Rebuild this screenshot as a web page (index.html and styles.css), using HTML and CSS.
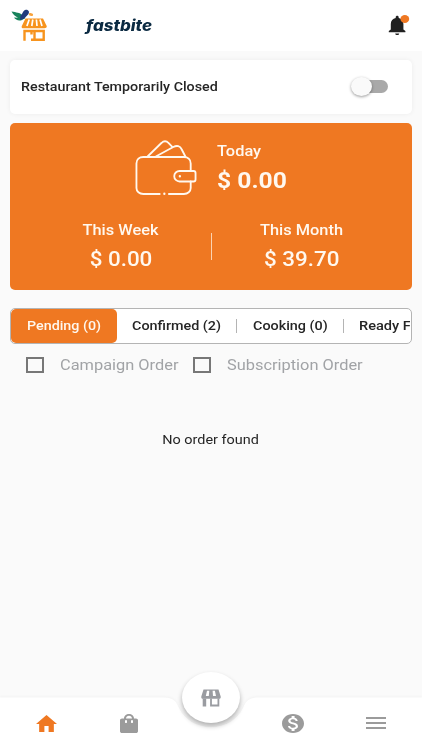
FILE: index.html
```html
<!DOCTYPE html>
<html lang="en">
<head>
<meta charset="utf-8">
<meta name="viewport" content="width=device-width, initial-scale=1">
<title>fastbite</title>
<link rel="stylesheet" href="styles.css">
</head>
<body>
<div class="app">
  <header class="topbar">
    <svg class="logo" viewBox="0 0 36 33" aria-hidden="true">
      <path fill="#f7941e" d="M14.500 9.500h17.500L35.700 17c.4 1.500-.8 2.200-2.200 2.200H12.300c-1.400 0-2-.8-1.500-2.200z"/>
      <path stroke="#fff" stroke-width="1.700" d="M18.200 10.500l-2.300 6.500M21.800 10.500l-1 6.500M25.400 10.500l.6 6.500M29 10.500l2 6.500"/>
      <path fill="none" stroke="#f7941e" stroke-width="2.400" d="M13.500 31.800V22h7v3.500M23.500 22h9.200v8.700h-9.200zM19 22h5M20 30.700h4"/>
      <path fill="#17835c" d="M.5 2.500c5 1 8 1 11 3.500l3 3-4 2.200c-3.500 1-6-.7-7.500-2.700l4 .2C4.200 7.300 2 5.500.5 2.500z"/>
      <path fill="#213a7c" d="M9.500 6.500c2-.5 2.200-5.500 5.500-5.700 3 0 3.700 2.500 2.300 4.400L13 9.800 9 11z"/>
      <path fill="#f8a33c" d="M18.300 4c3 0 4.800 1 3.200 3-1.200.3-2.500 0-3.700-1z"/>
    </svg>
    <h1 class="brand"><span>fastbite</span></h1>
    <svg class="bell" viewBox="0 0 22 22" aria-hidden="true">
      <path fill="#202020" d="M.8 17.300v-1.200l2-1.700V9c0-3.200 2-5.300 4.900-6V2.300c0-2 3-2 3 0V3c2.800.7 4.700 2.800 4.700 6v5.400l2 1.700v1.200zM7.200 18.400h4c0 2.200-4 2.200-4 0z"/>
      <ellipse cx="16.800" cy="4" rx="4.400" ry="4" fill="#ef7822"/>
    </svg>
  </header>

  <main class="content">
    <section class="status">
      <span class="t status-label">Restaurant Temporarily Closed</span>
      <span class="switch"><span class="knob"></span></span>
    </section>

    <section class="earnings">
      <div class="today">
        <svg class="wallet" viewBox="0 0 64 56" preserveAspectRatio="none" fill="none" stroke="#fff8ef" stroke-width="1.900" stroke-linecap="round" stroke-linejoin="round" aria-hidden="true">
          <path d="M25.500 54H8.500c-4 0-7-2.500-7-6V23.500c0-4 3-6.500 7-6.500h42c4 0 7 2.500 7 6.500V31M57.500 41.500V48c0 3.500-3 6-7 6H35"/>
          <path d="M13 16.500L27.500 2.800c2-2 5-2 7 0l4 4M21.500 16.500L39.500 7c4-2 7-1 8.500 2l4 7.500"/>
          <path d="M60.500 31H46c-3 0-5.500 2.300-5.500 5.200S43 41.500 46 41.500h14.500c1.200 0 2-.8 2-2V33c0-1.200-.8-2-2-2z"/>
          <path d="M46.300 36.200h.01M30.300 53.800h.01" stroke-width="2.400"/>
        </svg>
        <div class="figure-left">
          <span class="t caption cap-today">Today</span>
          <span class="t amount amt-today">$ 0.00</span>
        </div>
      </div>
      <div class="periods">
        <div class="figure week">
          <span class="t caption">This Week</span>
          <span class="t amount">$ 0.00</span>
        </div>
        <div class="rule"></div>
        <div class="figure month">
          <span class="t caption">This Month</span>
          <span class="t amount">$ 39.70</span>
        </div>
      </div>
    </section>

    <nav class="tabs">
      <div class="track">
        <div class="tab active"><span class="t">Pending (0)</span></div>
        <div class="tab confirmed"><span class="t">Confirmed (2)</span></div>
        <div class="tab cooking"><span class="t">Cooking (0)</span></div>
        <div class="tab ready"><span class="t">Ready F</span></div>
      </div>
    </nav>

    <div class="filters">
      <span class="box"></span><span class="filter campaign"><span class="t">Campaign Order</span></span>
      <span class="box"></span><span class="filter"><span class="t">Subscription Order</span></span>
    </div>

    <p class="empty"><span class="t">No order found</span></p>
  </main>

  <footer class="bottom">
    <svg class="shape" viewBox="0 0 422 54" preserveAspectRatio="none" aria-hidden="true">
      <path fill="#fff" d="M0 1.500H164C173 1.500 176 5 179 12C184 23 196 31 211 31S238 23 243 12C246 5 249 1.500 258 1.500H422V54H0z"/>
    </svg>
    <div class="item"><svg class="home" viewBox="2 3 20 17" preserveAspectRatio="none"><path fill="#ef7822" d="M10 20v-6h4v6h5v-8h3L12 3 2 12h3v8z"/></svg></div>
    <div class="item"><svg class="bag" viewBox="3 1 18 21" preserveAspectRatio="none"><path fill="#9b9b9b" d="M19 6h-2c0-2.760-2.240-5-5-5S7 3.240 7 6H5c-1.100 0-2 .9-2 2v12c0 1.100.9 2 2 2h14c1.100 0 2-.9 2-2V8c0-1.100-.9-2-2-2zm-9 4c0 .55-.45 1-1 1s-1-.45-1-1V8h2zm2-7c1.660 0 3 1.340 3 3H9c0-1.660 1.340-3 3-3zm4 7c0 .55-.45 1-1 1s-1-.45-1-1V8h2z"/></svg></div>
    <div class="item"></div>
    <div class="item"><svg class="money" viewBox="2 2 20 20" preserveAspectRatio="none"><path fill="#9b9b9b" d="M12 2C6.480 2 2 6.480 2 12s4.480 10 10 10 10-4.480 10-10S17.520 2 12 2zm1.410 16.090V20h-2.670v-1.930c-1.710-.36-3.160-1.460-3.270-3.400h1.960c.1 1.050.82 1.870 2.650 1.870 1.960 0 2.400-.98 2.400-1.590 0-.83-.44-1.610-2.670-2.140-2.480-.6-4.180-1.620-4.180-3.670 0-1.720 1.390-2.840 3.110-3.210V4h2.670v1.950c1.860.45 2.790 1.860 2.850 3.390H14.300c-.05-1.110-.64-1.870-2.220-1.870-1.500 0-2.400.68-2.400 1.640 0 .84.65 1.390 2.670 1.910s4.180 1.390 4.180 3.910c-.01 1.830-1.380 2.830-3.120 3.160z"/></svg></div>
    <div class="item"><span class="menu"></span></div>
    <div class="fab">
      <svg viewBox="0 0 20 18" preserveAspectRatio="none" aria-hidden="true">
        <path fill="#9a9ca1" fill-rule="evenodd" d="M2.500.5h15L19.700 7.500c.3 1.500-.5 2.300-1.600 2.300H1.900C.8 9.800 0 9 .3 7.500zM6 1.700L4.800 7h3L8.300 1.700zM11.600 1.700l.4 5.300h3L13.900 1.700z"/>
        <path fill="none" stroke="#9a9ca1" stroke-width="1.800" d="M10 9.500v7h7.400v-7"/>
        <path fill="#9a9ca1" d="M1.700 9.500h3.500v8H1.700z"/>
      </svg>
    </div>
  </footer>
</div>
</body>
</html>
```
FILE: styles.css
```css
* { box-sizing: border-box; }
body { margin: 0; background: #fafafa; font-family: Roboto, "Liberation Sans", sans-serif; color: #252525; }
.app { width: 422px; height: 750px; display: flex; flex-direction: column; overflow: hidden; }
.t { display: inline-block; white-space: nowrap; transform: scaleX(1.12); transform-origin: left center; }

.topbar { height: 51px; flex: none; background: #fff; display: flex; align-items: flex-start; padding: 0 12px 0 11px; }
.logo { width: 36px; height: 33px; margin-top: 9px; }
.brand { margin: 16px 0 0 39px; flex: 1; font: italic 800 15px/20px Inter, sans-serif; color: #0b2a42; }
.brand span { display: inline-block; transform: scaleX(1.13); transform-origin: left center; }
.bell { width: 22px; height: 22px; margin-top: 15px; }

.content { flex: 1; padding: 9px 10px 0; }
.status { height: 54px; background: #fff; border-radius: 5px; box-shadow: 0 0 5px rgba(0, 0, 0, .06); display: flex; align-items: center; justify-content: space-between; padding: 0 24px 1px 11px; }
.status-label { font-size: 13px; font-weight: 500; transform: scaleX(1.1); }
.switch { width: 32px; height: 13px; border-radius: 7px; background: #a9a9a9; display: flex; align-items: center; }
.knob { flex: none; width: 21px; height: 19px; margin-left: -5px; border-radius: 50%; background: #fafafa; box-shadow: 0 1px 3px rgba(0, 0, 0, .4); }

.earnings { height: 167px; margin-top: 9px; border-radius: 5px; background: #ef7822; color: #fff8ef; padding-top: 17px; }
.today { display: flex; padding-left: 125px; height: 73px; }
.wallet { width: 62px; height: 56px; }
.figure-left { margin-left: 20px; padding-top: 1px; display: flex; flex-direction: column; align-items: flex-start; }
.caption { font-size: 14px; line-height: 20px; font-weight: 500; transform: scaleX(1.17); }
.amount { font-size: 20px; line-height: 26px; font-weight: 500; }
.amt-today { font-size: 22px; font-weight: 700; margin-top: 7px; }
.periods { display: flex; padding-top: 7px; }
.figure { flex: 1; display: flex; flex-direction: column; align-items: center; }
.week { padding-left: 21px; }
.month { padding-right: 21px; }
.figure .t { transform-origin: center; }
.figure .amount { margin-top: 6px; }
.rule { width: 1px; height: 27px; margin-top: 13px; background: #fbd3b2; }

.tabs { height: 36px; margin-top: 18px; border: 1px solid #b4b4b4; border-radius: 5px; background: #fff; font-size: 13px; font-weight: 500; }
.track { display: flex; width: 399px; height: 34px; overflow: hidden; border-radius: 4px 0 0 4px; }
.tab { flex: none; height: 34px; display: flex; align-items: center; padding: 0 0 1px 15px; background: linear-gradient(#b4b4b4, #b4b4b4) right center / 1px 14px no-repeat; }
.active { width: 106px; padding-left: 16px; background: #ef7822; color: #fff8ef; border-radius: 5px; }
.active .t { transform: scaleX(1.1); }
.confirmed { width: 120px; }
.confirmed .t, .cooking .t { transform: scaleX(1.105); }
.cooking { width: 107px; padding-left: 16px; }
.ready { width: 66px; background: none; }

.filters { display: flex; align-items: center; height: 44px; padding: 0 0 2px 16px; }
.box { flex: none; width: 18px; height: 16px; border: 2px solid #777; }
.filter { margin-left: 16px; color: #a1a3a6; font-size: 14px; }
.filter .t { transform: scaleX(1.17); }
.campaign { width: 118px; margin-right: 15px; }
.empty { margin: 43px 0 0; text-align: center; font-size: 13px; line-height: 18px; }
.empty .t { transform-origin: center; transform: scaleX(1.11); }

.bottom { position: relative; height: 54px; flex: none; display: flex; padding: 0 5px; }
.shape { position: absolute; inset: 0; width: 422px; height: 54px; filter: drop-shadow(0 -1px 1px rgba(0, 0, 0, .03)); }
.item { position: relative; flex: 1; display: flex; align-items: center; justify-content: center; }
.home { width: 21px; height: 17px; }
.bag { width: 18px; height: 19px; }
.money { width: 22px; height: 19px; }
.menu { width: 20px; height: 12px; border: solid #9b9b9b; border-width: 2px 0; background: linear-gradient(#9b9b9b, #9b9b9b) center / 100% 2px no-repeat; }
.fab { position: absolute; left: 182px; top: -24px; width: 58px; height: 51px; border-radius: 50%; background: #fff; box-shadow: 0 3px 5px rgba(0, 0, 0, .3); display: flex; align-items: center; justify-content: center; }
.fab svg { width: 20px; height: 18px; }
```
